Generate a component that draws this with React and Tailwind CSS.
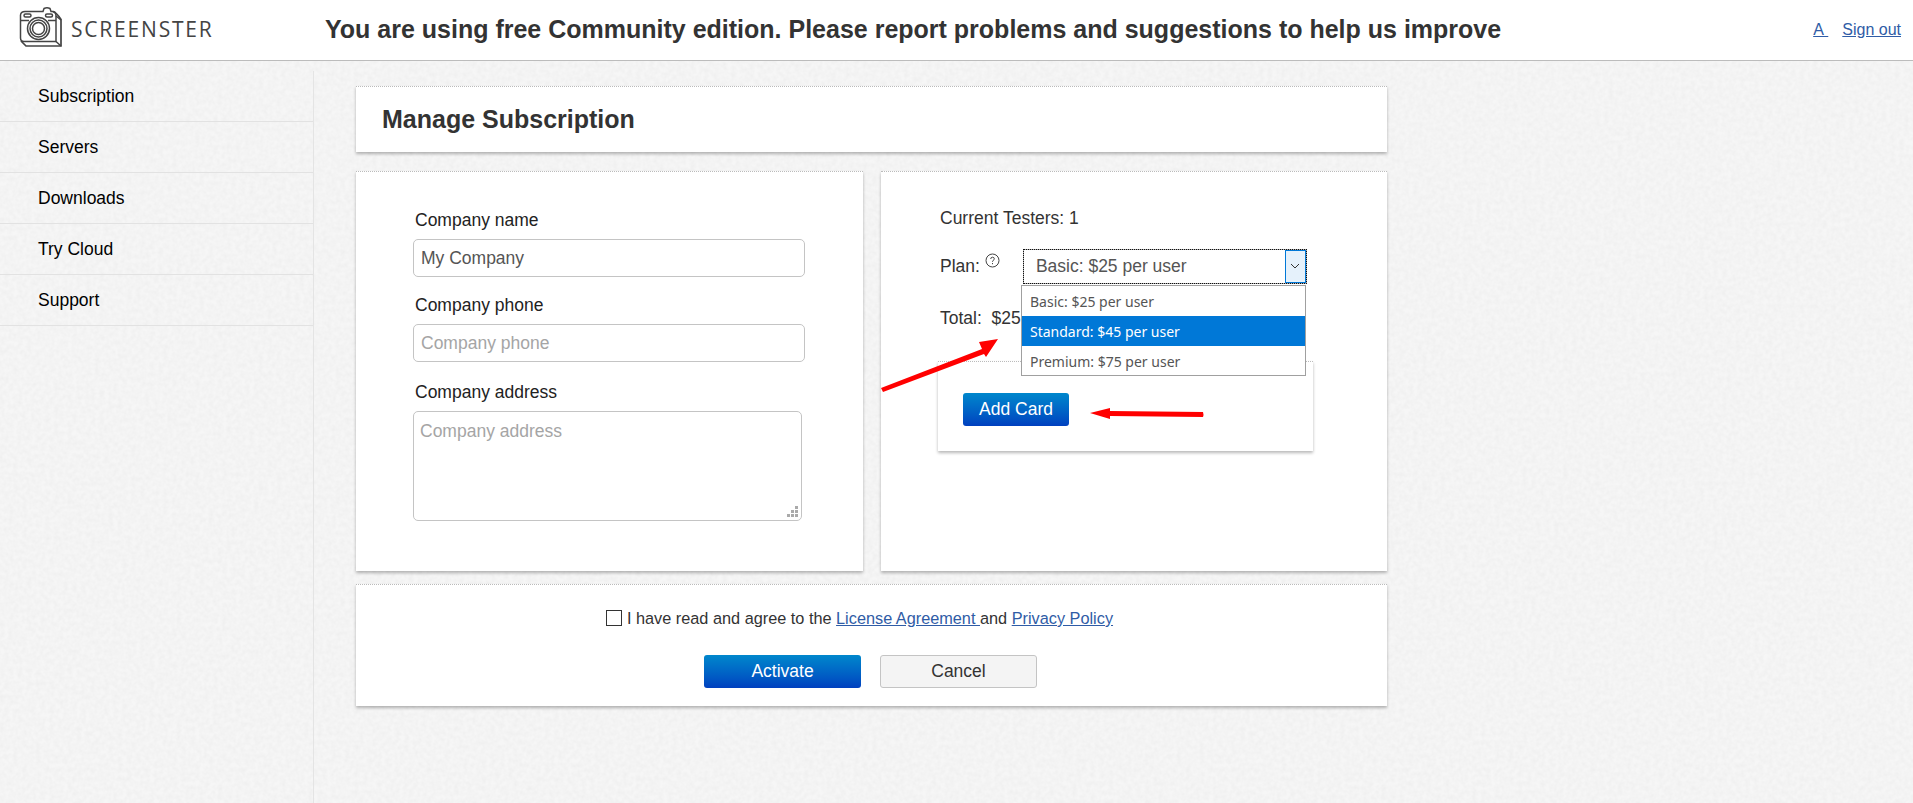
const F = { fontFamily: '"Liberation Sans", Arial, sans-serif' };

function Logo() {
  return (
    <svg width="44" height="42" viewBox="18 6 44 42" fill="none" stroke="#444" strokeWidth="1.5" className="shrink-0">
      <path d="M19.5 15 Q20 11.5 24 11.5 H42 L43 8.5 Q46 7 49 8.5 L50 11.5 H52 Q55 12 55 16 V41.5 H23 Q19.5 41.5 19.5 38 Z" />
      <path d="M52 11.5 Q56 13 60 19.5 V46 H25 L20 41" strokeWidth="1.7" />
      <path d="M55 41.5 L60 46 M55 16 L60 20" />
      <path d="M19.5 20.5 H28 M47 20.5 H55" />
      <rect x="23" y="14" width="7" height="3" rx="1.5" />
      <rect x="44.5" y="14" width="7" height="3" rx="1.5" />
      <circle cx="37.5" cy="28.5" r="11" />
      <circle cx="37.5" cy="28.5" r="8.5" />
      <circle cx="37.5" cy="28.5" r="6" />
    </svg>
  );
}

function Card({ className = "", children }) {
  return (
    <div className={"bg-white border-t border-dotted border-t-[#bbb] shadow-[0_2px_3px_rgba(0,0,0,0.28)] " + className}>
      {children}
    </div>
  );
}

function Field({ label, value, placeholder, mt }) {
  return (
    <div className={mt}>
      <div className="pl-[2px] text-[17.5px] leading-[18px] text-[#222]">{label}</div>
      <input
        readOnly
        value={value || ""}
        placeholder={placeholder}
        className="mt-[10px] block w-[392px] h-[38px] px-[7px] bg-white border border-[#c4c4c4] rounded-[5px] text-[17.5px] text-[#555] placeholder:text-[#a5a5a5] outline-none"
        style={F}
      />
    </div>
  );
}

export default function App() {
  const side = ["Subscription", "Servers", "Downloads", "Try Cloud", "Support"];
  return (
    <div className="relative min-h-screen h-[803px] overflow-hidden bg-[#f6f6f6]" style={F}>
      <svg className="absolute left-0 top-0 pointer-events-none" width="1913" height="803">
        <filter id="paper">
          <feTurbulence type="fractalNoise" baseFrequency="0.22" numOctaves="2" seed="4" />
          <feColorMatrix values="0 0 0 0 0.55  0 0 0 0 0.55  0 0 0 0 0.55  0 0 0 0.22 -0.06" />
        </filter>
        <rect width="1913" height="803" filter="url(#paper)" />
      </svg>

      <header className="relative h-[61px] bg-white border-b border-[#bcbcbc] flex items-center">
        <div className="ml-[19px] mt-[-6px]"><Logo /></div>
        <div className="ml-[8px] w-[254px] text-[21px] tracking-[1.8px] text-[#444]" style={{ fontFamily: '"Open Sans", sans-serif' }}>SCREENSTER</div>
        <div className="text-[25px] font-bold text-[#333] whitespace-nowrap">You are using free Community edition. Please report problems and suggestions to help us improve</div>
        <div className="ml-auto mr-[12px] flex gap-[14px] text-[16px] text-[#2f5ca6]">
          <a className="underline">A&nbsp;</a>
          <a className="underline">Sign out</a>
        </div>
      </header>

      <div className="relative flex h-[742px]">
        <aside className="w-[314px] mt-[10px] border-r border-[#e4e4e4] shrink-0">
          {side.map((s) => (
            <div key={s} className="h-[51px] flex items-center pl-[38px] text-[17.5px] text-black border-b border-[#e2e2e2]">{s}</div>
          ))}
        </aside>

        <main className="ml-[42px] pt-[25px] w-[1031px]">
          <Card className="h-[66px] flex items-center pl-[26px]">
            <h1 className="text-[25px] font-bold text-[#333]">Manage Subscription</h1>
          </Card>

          <div className="mt-[19px] flex gap-[18px]">
            <Card className="w-[507px] h-[400px] pt-[39px] pl-[57px]">
              <Field label="Company name" value="My Company" />
              <Field label="Company phone" placeholder="Company phone" mt="mt-[19px]" />
              <div className="mt-[21px]">
                <div className="pl-[2px] text-[17.5px] leading-[18px] text-[#222]">Company address</div>
                <div className="relative mt-[10px] w-[389px] h-[110px] border border-[#c4c4c4] rounded-[5px] bg-white px-[6px] pt-[10px] text-[17.5px] leading-[18px] text-[#a5a5a5]">
                  Company address
                  <svg className="absolute right-[3px] bottom-[3px]" width="11" height="11" viewBox="0 0 11 11" fill="#aaa">
                    <rect x="8" y="0" width="3" height="3" /><rect x="4" y="4" width="3" height="3" /><rect x="8" y="4" width="3" height="3" />
                    <rect x="0" y="8" width="3" height="3" /><rect x="4" y="8" width="3" height="3" /><rect x="8" y="8" width="3" height="3" />
                  </svg>
                </div>
              </div>
            </Card>

            <Card className="relative w-[506px] h-[400px] pl-[59px] pt-[37px] text-[17.5px] text-[#333]">
              <div className="leading-[18px]">Current Testers: 1</div>
              <div className="mt-[21px] flex items-center h-[36px]">
                <span>Plan:</span>
                <svg className="ml-[5px] mb-[11px]" width="15" height="15" viewBox="0 0 15 15" fill="none" stroke="#444">
                  <circle cx="7.5" cy="7.5" r="6.5" />
                  <path d="M5.7 6 Q5.8 4.2 7.5 4.2 Q9.3 4.2 9.3 5.8 Q9.3 6.8 8.2 7.4 Q7.5 7.8 7.5 8.8" />
                  <path d="M7.5 10 V11.2" />
                </svg>
                <div className="ml-[23px] relative w-[284px] h-[35px] border border-[#aaa] pl-[12px] flex items-center text-[#555]">
                  Basic: $25 per user
                  <div className="absolute right-0 top-0 bottom-0 w-[21px] bg-[#e5f1fb] border border-[#0078d7] flex items-center justify-center">
                    <svg width="10" height="6" viewBox="0 0 10 6" fill="none" stroke="#333"><path d="M1 1 L5 5 L9 1" /></svg>
                  </div>
                  <span className="absolute inset-[-1px] border border-dotted border-[#111]" />
                </div>
              </div>
              <div className="mt-[25px] leading-[18px]">Total:&nbsp; $25</div>

              <Card className="absolute left-[57px] top-[189px] w-[375px] h-[90px] pl-[25px] pt-[31px]">
                <button className="w-[106px] h-[33px] rounded-[3px] bg-gradient-to-b from-[#0087cc] to-[#0040bf] text-white text-[17.5px]">Add Card</button>
              </Card>

              <div className="absolute left-[140px] top-[113px] w-[285px] h-[91px] bg-white border border-[#a0a0a0] text-[14px] text-[#555]" style={{ fontFamily: '"Noto Sans", sans-serif' }}>
                <div className="h-[30px] pl-[8px] flex items-center">Basic: $25 per user</div>
                <div className="h-[30px] pl-[8px] flex items-center bg-[#0078d7] text-white">Standard: $45 per user</div>
                <div className="h-[30px] pl-[8px] flex items-center">Premium: $75 per user</div>
              </div>
            </Card>
          </div>

          <Card className="mt-[13px] h-[122px] flex flex-col items-center">
            <div className="mt-[24px] mr-[24px] flex items-center text-[16.3px] leading-[18px] text-[#333]">
              <span className="mr-[5px] w-[16px] h-[16px] border border-[#333] bg-white inline-block" />
              I have read and agree to the&nbsp;<a className="underline text-[#2f5ca6]">License Agreement&nbsp;</a>and&nbsp;<a className="underline text-[#2f5ca6]">Privacy Policy</a>
            </div>
            <div className="mt-[28px] mr-[2px] flex gap-[19px]">
              <button className="w-[157px] h-[33px] rounded-[3px] bg-gradient-to-b from-[#0087cc] to-[#0040bf] text-white text-[17.5px]">Activate</button>
              <button className="w-[157px] h-[33px] rounded-[3px] bg-[#f4f4f4] border border-[#c4c4c4] text-[#333] text-[17.5px]">Cancel</button>
            </div>
          </Card>
        </main>
      </div>

      <svg className="absolute left-0 top-0 pointer-events-none" width="1913" height="803" fill="#f00">
        <path d="M881 388 L982 349 L979 342 L998 339 L986 357 L984 354 L883 392 Z" />
        <path d="M1090 413 L1110 408 L1110 411 L1203 412 Q1204 415 1203 417 L1110 416 L1110 419 Z" />
      </svg>
    </div>
  );
}
